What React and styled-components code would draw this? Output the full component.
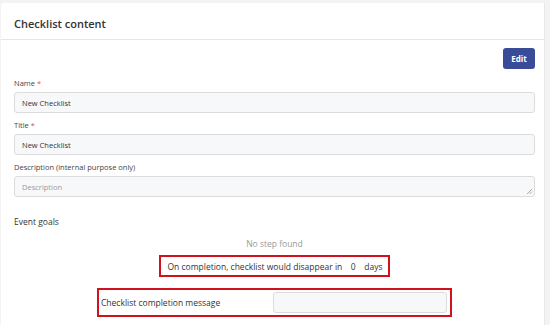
import React from "react";
import styled, { createGlobalStyle } from "styled-components";

const Global = createGlobalStyle`
  html, body { margin: 0; padding: 0; background: #fff; }
  body { font-family: "Open Sans", "Noto Sans", sans-serif; color: #333; }
  * { box-sizing: border-box; }
`;

const Page = styled.div`
  width: 550px;
  height: 325px;
  overflow: hidden;
  background: #f3f3f4;
  padding-top: 3px;
`;

const Card = styled.div`
  width: 544px;
  height: 322px;
  margin-left: 1px;
  background: #fff;
  border-right: 1px solid #e8e8e8;
  border-top-left-radius: 3px;
`;

const Header = styled.div`
  height: 37px;
  padding: 5px 13px 0;
  display: flex;
  align-items: center;
  border-bottom: 1px solid #e6e6e6;
  font-size: 11px;
  font-weight: 600;
  color: #333;
`;

const Body = styled.div`
  padding: 8px 9px 0 13px;
  display: flex;
  flex-direction: column;
`;

const Toolbar = styled.div`
  display: flex;
  justify-content: flex-end;
  height: 21px;
  margin-bottom: 9px;
`;

const Button = styled.button`
  width: 32px;
  height: 21px;
  border: none;
  border-radius: 3px;
  background: #3a4c98;
  color: #fff;
  font-family: inherit;
  font-size: 8px;
  font-weight: 700;
  padding: 0;
  cursor: pointer;
`;

const Label = styled.div`
  font-size: 7.5px;
  color: #444;
  height: 11px;
  line-height: 11px;
  margin-bottom: 3px;
  span { color: #d9534f; }
`;

const Input = styled.div`
  height: 21px;
  border: 1px solid #dcdcdc;
  border-radius: 3px;
  background: #f7f8fa;
  font-size: 7.5px;
  color: ${p => (p.placeholder ? "#9a9a9a" : "#333")};
  display: flex;
  align-items: center;
  padding-left: 7px;
  margin-bottom: ${p => (p.mb === undefined ? 7 : p.mb)}px;
  position: relative;
`;

const Grip = styled.svg`
  position: absolute;
  right: 1px;
  bottom: 1px;
`;

const Section = styled.div`
  font-size: 8.5px;
  font-weight: 500;
  color: #333;
  margin-top: 19px;
  height: 12px;
  line-height: 12px;
`;

const Empty = styled.div`
  text-align: center;
  font-size: 8.5px;
  color: #9a9a9a;
  margin-top: 10px;
  height: 12px;
  line-height: 12px;
`;

const RedBox = styled.div`
  align-self: center;
  border: 2px solid #d0121e;
  display: flex;
  align-items: center;
`;

const Expiry = styled(RedBox)`
  margin-top: 5px;
  height: 22px;
  padding: 0 5px 0 6px;
  font-size: 8.5px;
  color: #333;
  gap: 6px;
`;

const Days = styled.span`
  display: inline-block;
  width: 10px;
  text-align: center;
`;

const Message = styled(RedBox)`
  margin-top: 11px;
  width: 355px;
  height: 29px;
  padding: 0 3px 0 2px;
  justify-content: space-between;
  font-size: 8.5px;
  color: #333;
`;

const SmallInput = styled.div`
  width: 174px;
  height: 21px;
  border: 1px solid #dcdcdc;
  border-radius: 3px;
  background: #f7f8fa;
`;

export default function App() {
  return (
    <>
      <Global />
      <Page>
        <Card>
          <Header>Checklist content</Header>
          <Body>
            <Toolbar>
              <Button>Edit</Button>
            </Toolbar>
            <Label>Name <span>*</span></Label>
            <Input>New Checklist</Input>
            <Label>Title <span>*</span></Label>
            <Input>New Checklist</Input>
            <Label>Description (internal purpose only)</Label>
            <Input placeholder mb={0}>
              Description
              <Grip width="7" height="7" viewBox="0 0 7 7">
                <path d="M6 1 L1 6 M6 3.5 L3.5 6" stroke="#999" strokeWidth="0.8" />
              </Grip>
            </Input>
            <Section>Event goals</Section>
            <Empty>No step found</Empty>
            <Expiry>
              On completion, checklist would disappear in <Days>0</Days> days
            </Expiry>
            <Message>
              Checklist completion message
              <SmallInput />
            </Message>
          </Body>
        </Card>
      </Page>
    </>
  );
}
